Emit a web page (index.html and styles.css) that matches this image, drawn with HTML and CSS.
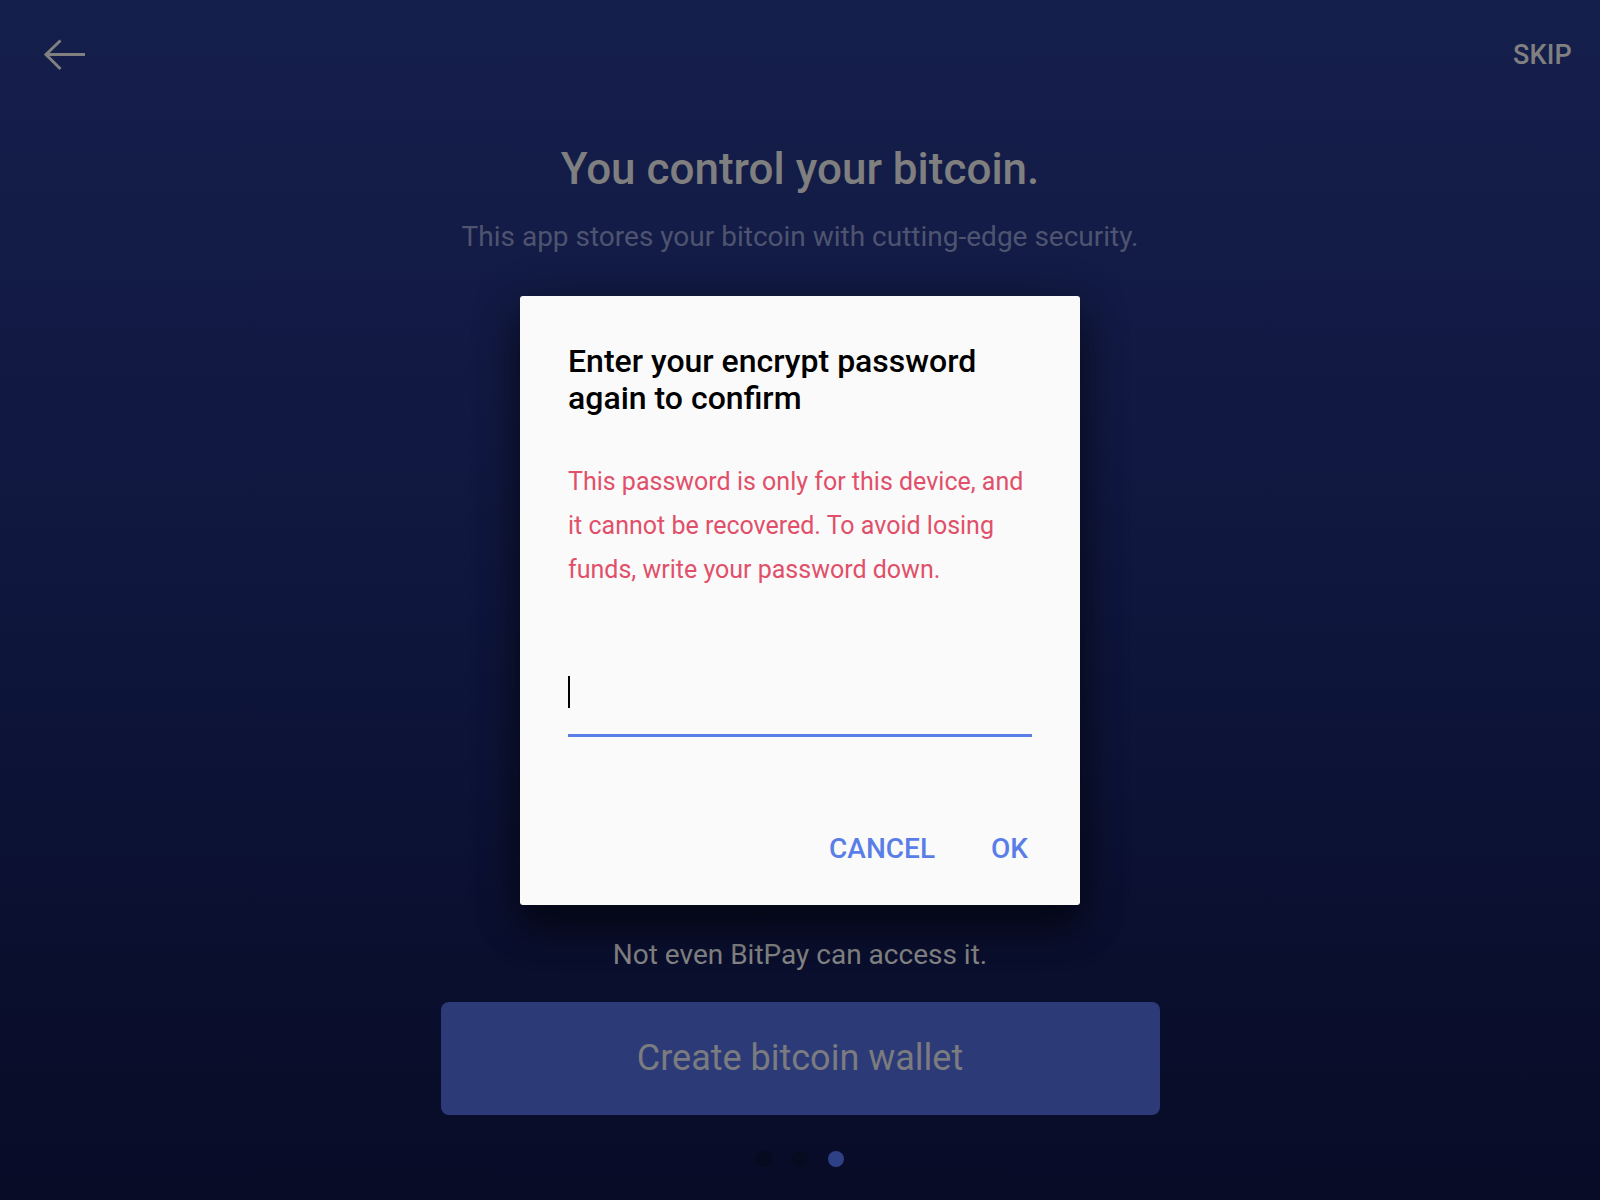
FILE: index.html
```html
<!DOCTYPE html>
<html lang="en">
<head>
<meta charset="utf-8">
<title>You control your bitcoin</title>
<link rel="stylesheet" href="styles.css">
</head>
<body>
<div class="page">
  <header class="topbar">
    <button class="back" aria-label="Back">
      <svg width="42" height="32" viewBox="0 0 42 32" fill="none" stroke="#808080" stroke-width="3" stroke-linecap="butt">
        <path d="M42 15.5H3.5"/>
        <path d="M17.5 1.5L3 15.5l14.5 14.5"/>
      </svg>
    </button>
    <span class="skip">SKIP</span>
  </header>

  <section class="intro">
    <h1 class="title">You control your bitcoin.</h1>
    <p class="subtitle">This app stores your bitcoin with cutting-edge security.</p>
  </section>

  <section class="bottom">
    <p class="note">Not even BitPay can access it.</p>
    <button class="create">Create bitcoin wallet</button>
    <div class="dots">
      <span class="dot"></span>
      <span class="dot"></span>
      <span class="dot active"></span>
    </div>
  </section>

  <div class="overlay">
    <div class="dialog">
      <h2 class="dialog-title">Enter your encrypt password again to confirm</h2>
      <p class="dialog-msg">This password is only for this device, and it cannot be recovered. To avoid losing funds, write your password down.</p>
      <div class="field"><span class="caret"></span></div>
      <div class="actions">
        <button class="action">CANCEL</button>
        <button class="action">OK</button>
      </div>
    </div>
  </div>
</div>
</body>
</html>
```

FILE: styles.css
```css
* { box-sizing: border-box; }

html, body {
  margin: 0;
  padding: 0;
}

body {
  font-family: Roboto, "Noto Sans", "Liberation Sans", sans-serif;
  background: #0b1030;
}

.page {
  position: relative;
  width: 1600px;
  height: 1200px;
  display: flex;
  flex-direction: column;
  background: linear-gradient(180deg, #151f4b 0%, #121a44 30%, #0e153b 55%, #0a0f2e 80%, #080c27 100%);
  overflow: hidden;
}

.topbar {
  height: 110px;
  display: flex;
  align-items: center;
  justify-content: space-between;
  padding: 0 28px 0 43px;
}

.back {
  background: none;
  border: 0;
  padding: 0;
  width: 42px;
  height: 32px;
  display: flex;
}

.skip {
  color: #808080;
  font-size: 27px;
  font-weight: 500;
  letter-spacing: 0.2px;
}

.intro {
  text-align: center;
  margin-top: 33px;
}

.title {
  margin: 0;
  font-size: 44px;
  line-height: 52px;
  font-weight: 500;
  color: #7f7f7f;
}

.subtitle {
  margin: 26px 0 0;
  font-size: 28px;
  line-height: 32px;
  color: #4e5470;
}

.bottom {
  margin-top: auto;
  display: flex;
  flex-direction: column;
  align-items: center;
  padding-bottom: 33px;
}

.note {
  margin: 0;
  font-size: 28px;
  line-height: 36px;
  color: #858585;
}

.create {
  margin-top: 29px;
  width: 719px;
  height: 113px;
  border: 0;
  border-radius: 8px;
  background: #2c3b77;
  color: #7b7b80;
  font-family: Roboto, "Noto Sans", sans-serif;
  font-size: 36px;
  line-height: 113px;
  padding: 0;
}

.dots {
  margin-top: 36px;
  display: flex;
  gap: 20px;
}

.dot {
  width: 16px;
  height: 16px;
  border-radius: 50%;
  background: #070b1f;
}

.dot.active {
  background: #2f4186;
}

.overlay {
  position: absolute;
  inset: 0;
  display: flex;
  align-items: center;
  justify-content: center;
}

.dialog {
  width: 560px;
  height: 609px;
  background: #fafafa;
  border-radius: 3px;
  padding: 47px 48px 40px;
  display: flex;
  flex-direction: column;
  box-shadow: 0 24px 38px rgba(0, 0, 0, 0.45), 0 9px 46px rgba(0, 0, 0, 0.35);
}

.dialog-title {
  margin: 0;
  font-size: 32px;
  line-height: 37px;
  font-weight: 500;
  color: #000;
}

.dialog-msg {
  margin: 43px 0 0;
  font-size: 25px;
  line-height: 44px;
  color: #e1506a;
}

.field {
  margin-top: 84px;
  padding-bottom: 26px;
  border-bottom: 3px solid #5a7ee8;
  height: 61px;
}

.caret {
  display: block;
  width: 2px;
  height: 32px;
  background: #000;
}

.actions {
  margin-top: auto;
  display: flex;
  justify-content: flex-end;
  gap: 56px;
  padding-right: 4px;
}

.action {
  background: none;
  border: 0;
  padding: 0;
  font-family: Roboto, "Noto Sans", sans-serif;
  font-size: 28px;
  line-height: 32px;
  font-weight: 500;
  color: #5a7ee8;
}
```
